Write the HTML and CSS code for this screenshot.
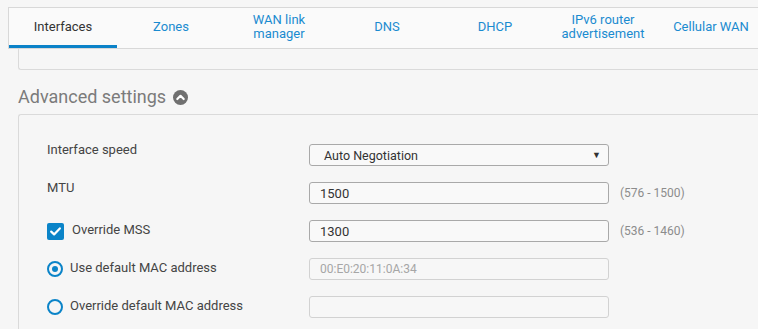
FILE: index.html
```html
<!DOCTYPE html>
<html lang="en">
<head>
    <meta charset="UTF-8">
    <title>Interfaces - Advanced settings</title>
    <link rel="stylesheet" href="styles.css">
</head>
<body>

    <div class="page">
        <!-- Top navigation tabs -->
        <div class="tabs">
            <div class="tab active">Interfaces</div>
            <div class="tab">Zones</div>
            <div class="tab">WAN link<br>manager</div>
            <div class="tab">DNS</div>
            <div class="tab">DHCP</div>
            <div class="tab">IPv6 router<br>advertisement</div>
            <div class="tab">Cellular WAN</div>
        </div>

        <div class="tab-panel"></div>

        <h2 class="section-title">
            Advanced settings
            <span class="collapse-icon">
                <svg width="15" height="15" viewBox="0 0 15 15">
                    <circle cx="7.5" cy="7.5" r="7.5" fill="#707070"/>
                    <path d="M4.3 9 L7.5 5.8 L10.7 9" fill="none" stroke="#fff" stroke-width="2.2" stroke-linecap="round" stroke-linejoin="round"/>
                </svg>
            </span>
        </h2>

        <div class="settings">
            <div class="form-row">
                <div class="form-label">Interface speed</div>
                <div class="select">
                    <span>Auto Negotiation</span>
                    <span class="select-arrow">&#9660;</span>
                </div>
            </div>

            <div class="form-row">
                <div class="form-label">MTU</div>
                <input class="text-input" type="text" value="1500">
                <div class="hint">(576 - 1500)</div>
            </div>

            <div class="form-row">
                <div class="form-label option">
                    <span class="checkbox">
                        <svg width="11" height="9" viewBox="0 0 11 9">
                            <path d="M1.2 4.6 L4.1 7.4 L9.8 1.4" fill="none" stroke="#fff" stroke-width="2.2" stroke-linecap="round" stroke-linejoin="round"/>
                        </svg>
                    </span>
                    <span class="option-text">Override MSS</span>
                </div>
                <input class="text-input" type="text" value="1300">
                <div class="hint">(536 - 1460)</div>
            </div>

            <div class="form-row">
                <div class="form-label option">
                    <span class="radio checked"></span>
                    <span class="option-text radio-text">Use default MAC address</span>
                </div>
                <input class="text-input" type="text" value="00:E0:20:11:0A:34" disabled>
            </div>

            <div class="form-row">
                <div class="form-label option">
                    <span class="radio"></span>
                    <span class="option-text radio-text">Override default MAC address</span>
                </div>
                <input class="text-input" type="text" value="" disabled>
            </div>
        </div>
    </div>

</body>
</html>
```

FILE: styles.css
```css
/* General Reset */
* {
    margin: 0;
    padding: 0;
    box-sizing: border-box;
}

body, html {
    height: 100vh;
    font-family: Roboto, "Liberation Sans", sans-serif;
    background: #f6f6f6;
    color: #444;
    overflow: hidden;
}

.page {
    padding: 7px 0 0 8px;
    height: 100vh;
    display: flex;
    flex-direction: column;
    overflow: hidden;
}

/* Tabs */
.tabs {
    display: flex;
    height: 42px;
    flex: none;
    overflow: hidden;
    background: #fafafa;
    border: 1px solid #d8d8d8;
    border-right: none;
}

.tab {
    width: 108px;
    flex: none;
    display: flex;
    align-items: center;
    justify-content: center;
    text-align: center;
    font-size: 13px;
    line-height: 14px;
    color: #1a8bd0;
    padding-bottom: 2px;
}

.tab.active {
    color: #333;
    box-shadow: inset 0 -3px 0 #0b82c8;
}

.tab-panel {
    margin-left: 10px;
    height: 21px;
    flex: none;
    border: 1px solid #dadada;
    border-top: none;
    border-right: none;
    border-bottom-left-radius: 3px;
}

/* Section heading */
.section-title {
    margin: 16px 0 6px 10px;
    font-size: 18px;
    line-height: 22px;
    font-weight: normal;
    color: #7b7b7b;
    display: flex;
    align-items: center;
}

.collapse-icon {
    display: flex;
    margin-left: 7px;
    margin-top: 1px;
}

/* Settings panel */
.settings {
    flex: 1;
    margin-left: 10px;
    padding: 29px 0 0 28px;
    border: 1px solid #dadada;
    border-right: none;
    border-bottom: none;
    border-top-left-radius: 3px;
    overflow: hidden;
}

.form-row {
    display: flex;
    align-items: flex-start;
    height: 22px;
    margin-bottom: 16px;
}

.form-label {
    width: 262px;
    flex: none;
    font-size: 13px;
    line-height: 14px;
    margin-top: -1px;
    color: #444;
}

.form-label.option {
    display: flex;
    align-items: center;
    height: 22px;
    margin-top: 0;
}

.option-text {
    margin-left: 8px;
    margin-top: -2px;
}

.option-text.radio-text {
    margin-left: 7px;
}

/* Checkbox */
.checkbox {
    width: 17px;
    height: 17px;
    flex: none;
    border-radius: 2px;
    background: #0b84c8;
    display: flex;
    align-items: center;
    justify-content: center;
}

/* Radio */
.radio {
    width: 16px;
    height: 16px;
    flex: none;
    border-radius: 50%;
    border: 2px solid #0b84c8;
    display: flex;
    align-items: center;
    justify-content: center;
}

.radio.checked::after {
    content: "";
    width: 6px;
    height: 6px;
    border-radius: 50%;
    background: #0b84c8;
}

/* Select and inputs */
.select,
.text-input {
    width: 300px;
    height: 22px;
    flex: none;
    border: 1px solid #a9a9a9;
    border-radius: 3px;
    background: #f9f9f9;
    font-family: Roboto, "Liberation Sans", sans-serif;
    font-size: 13px;
    color: #333;
}

.select {
    display: flex;
    align-items: center;
    justify-content: space-between;
    padding: 0 7px 0 14px;
    font-size: 12.5px;
}

.select-arrow {
    font-size: 9px;
    color: #333;
}

.text-input {
    padding: 0 10px;
    outline: none;
}

.text-input:disabled {
    border-color: #d2d2d2;
    color: #a6a6a6;
    background: #f7f7f7;
    font-size: 12px;
}

.hint {
    margin-left: 11px;
    font-size: 12px;
    line-height: 22px;
    color: #8c8c8c;
}
```
